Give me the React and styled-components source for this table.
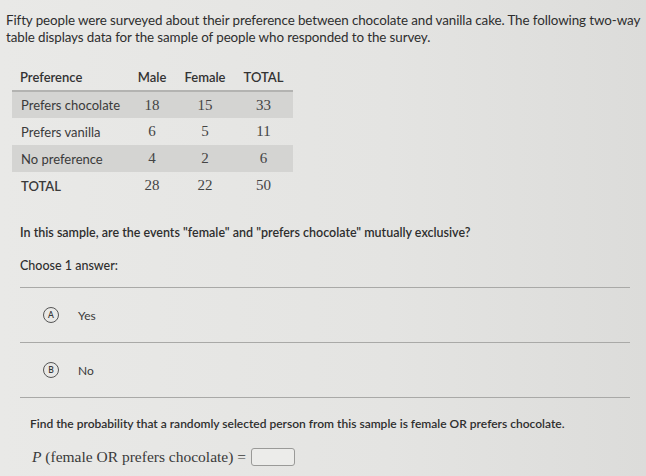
import React from 'react'
import styled, { createGlobalStyle } from 'styled-components'

const rows = [
  { label: 'Prefers chocolate', male: 18, female: 15, total: 33, shaded: true },
  { label: 'Prefers vanilla', male: 6, female: 5, total: 11 },
  { label: 'No preference', male: 4, female: 2, total: 6, shaded: true },
  { label: 'TOTAL', male: 28, female: 22, total: 50, bold: true },
]

const choices = [
  { letter: 'A', text: 'Yes' },
  { letter: 'B', text: 'No' },
]

export default function App() {
  return (
    <Page>
      <GlobalStyle />
      <Intro>
        Fifty people were surveyed about their preference between chocolate and vanilla cake. The following two-way
        table displays data for the sample of people who responded to the survey.
      </Intro>
      <Table>
        <colgroup>
          <col style={{ width: 116 }} />
          <col style={{ width: 48 }} />
          <col style={{ width: 58 }} />
          <col style={{ width: 59 }} />
        </colgroup>
        <thead>
          <tr>
            <HeadCell $left>Preference</HeadCell>
            <HeadCell>Male</HeadCell>
            <HeadCell>Female</HeadCell>
            <HeadCell>TOTAL</HeadCell>
          </tr>
        </thead>
        <tbody>
          {rows.map((r) => (
            <Row key={r.label} $shaded={r.shaded}>
              <LabelCell $bold={r.bold}>{r.label}</LabelCell>
              <NumCell>{r.male}</NumCell>
              <NumCell>{r.female}</NumCell>
              <NumCell>{r.total}</NumCell>
            </Row>
          ))}
        </tbody>
      </Table>
      <Question>
        In this sample, are the events "female" and "prefers chocolate" mutually exclusive?
      </Question>
      <Prompt>Choose 1 answer:</Prompt>
      <Choices>
        {choices.map((c) => (
          <Choice key={c.letter}>
            <Letter>{c.letter}</Letter>
            {c.text}
          </Choice>
        ))}
      </Choices>
      <Question2>
        Find the probability that a randomly selected person from this sample is female OR prefers chocolate.
      </Question2>
      <Formula>
        <i>P</i>&nbsp;(female OR prefers chocolate) =
        <AnswerBox />
      </Formula>
    </Page>
  )
}

const GlobalStyle = createGlobalStyle`
  html, body {
    margin: 0;
    background: #e7e7e5;
  }
`

const Page = styled.div`
  width: 646px;
  height: 476px;
  overflow: hidden;
  box-sizing: border-box;
  padding: 12px 0 0 6px;
  background: linear-gradient(90deg, #e9e9e7 0%, #e4e4e2 60%, #dcdcda 100%);
  font-family: Lato, 'Open Sans', sans-serif;
  color: #2e2e2e;
`

const Intro = styled.p`
  margin: 0;
  font-size: 13.4px;
  line-height: 17px;
  width: 645px;
  letter-spacing: -0.1px;
`

const Table = styled.table`
  margin: 19px 0 0 6px;
  border-collapse: collapse;
  table-layout: fixed;
  width: 281px;
  font-size: 13px;
`

const HeadCell = styled.th`
  font-weight: 600;
  text-align: ${(p) => (p.$left ? 'left' : 'center')};
  padding: 4px 0 5px ${(p) => (p.$left ? '8px' : '0')};
  height: 12px;
  border-bottom: 2px solid #b3b3b1;
  color: #333;
  white-space: nowrap;
`

const Row = styled.tr`
  background: ${(p) => (p.$shaded ? '#d4d4d2' : 'transparent')};
  height: 27px;
`

const LabelCell = styled.td`
  padding: 0 0 0 9px;
  white-space: nowrap;
  font-weight: ${(p) => (p.$bold ? 600 : 400)};
  color: #3a3a3a;
`

const NumCell = styled.td`
  text-align: center;
  padding: 0;
  font-family: 'Liberation Serif', 'DejaVu Serif', serif;
  font-size: 15px;
  color: #444;
`

const Question = styled.p`
  margin: 26px 0 0 14px;
  font-size: 12.5px;
  font-weight: 600;
`

const Prompt = styled.p`
  margin: 18px 0 0 14px;
  font-size: 12.5px;
  font-weight: 500;
`

const Choices = styled.div`
  margin: 14px 16px 0 14px;
  border-top: 1px solid #a9a9a7;
`

const Choice = styled.div`
  display: flex;
  align-items: center;
  gap: 19px;
  height: 54px;
  padding-left: 23px;
  font-size: 12px;
  color: #3a3a3a;
  border-bottom: 1px solid #a9a9a7;
`

const Letter = styled.span`
  width: 14px;
  height: 14px;
  border: 1.5px solid #555;
  border-radius: 50%;
  display: inline-flex;
  align-items: center;
  justify-content: center;
  font-size: 8.5px;
  font-weight: 600;
`

const Question2 = styled.p`
  margin: 18px 0 0 24px;
  font-size: 12px;
  font-weight: 600;
`

const Formula = styled.div`
  display: flex;
  align-items: center;
  margin: 17px 0 0 26px;
  font-family: 'Liberation Serif', 'DejaVu Serif', serif;
  font-size: 15.5px;
  color: #3a3a3a;
`

const AnswerBox = styled.span`
  width: 42px;
  height: 16px;
  margin-left: 5px;
  border: 1px solid #9a9a98;
  border-radius: 3px;
  background: #ececea;
`
